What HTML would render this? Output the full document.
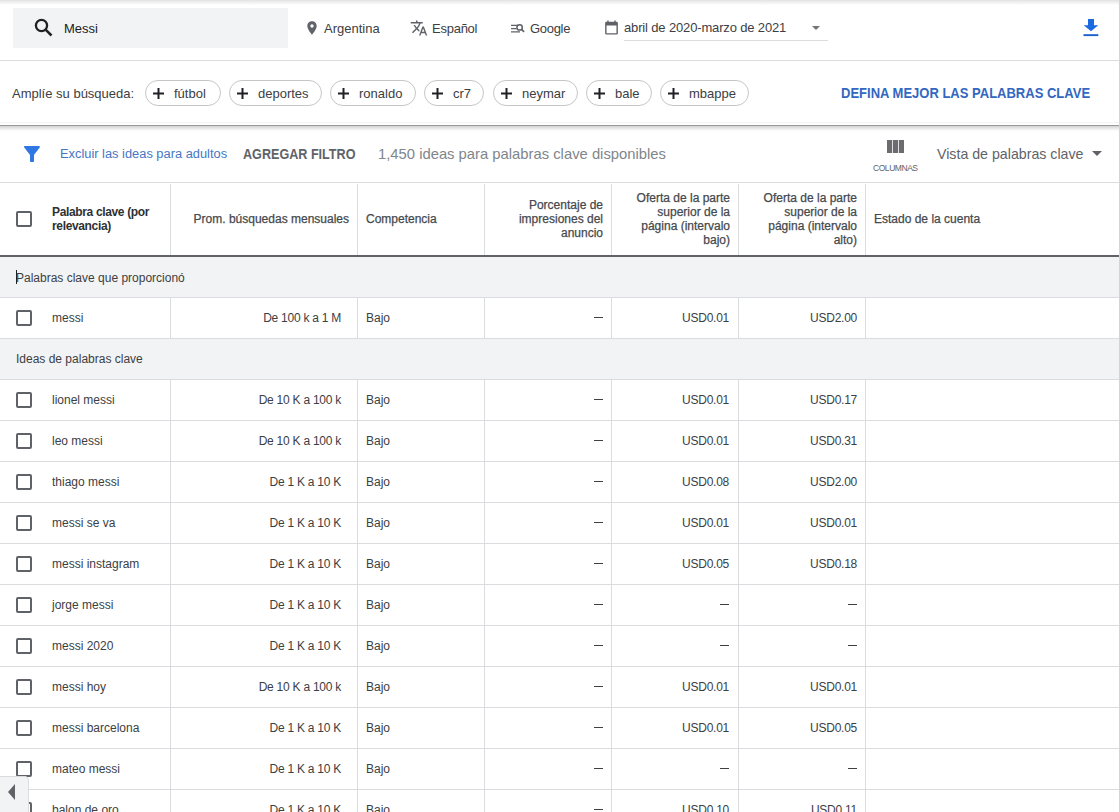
<!DOCTYPE html>
<html><head><meta charset="utf-8">
<style>
*{margin:0;padding:0;box-sizing:border-box}
html,body{width:1119px;height:812px;overflow:hidden;background:#fff;font-family:"Liberation Sans",sans-serif;color:#3c4043}
.a{position:absolute;white-space:nowrap}
#topshadow{position:absolute;left:0;top:0;width:1119px;height:5px;background:linear-gradient(#e2e2e2,#fff)}
#search{position:absolute;left:13px;top:8px;width:275px;height:40px;background:#f1f3f4}
.t13{font-size:13px;line-height:16px;color:#3c4043}
.chip{position:absolute;top:80px;height:26px;border:1px solid #c4c7c5;border-radius:13px;background:#fff}
.chip svg{position:absolute;left:7px;top:7px}
.chip span{position:absolute;left:28px;top:5px;font-size:13px;line-height:16px;color:#3c4043;white-space:nowrap}
.hl{position:absolute;left:0;width:1119px;height:1px;background:#dadce0}
.vl{position:absolute;width:1px;background:#dadce0}
.hd{position:absolute;top:183px;height:72px;display:flex;align-items:center;font-size:12px;line-height:14px;color:#45494d;-webkit-text-stroke:0.25px #45494d}
.hd.r{justify-content:flex-end;text-align:right}
.grp{position:absolute;left:0;width:1119px;background:#f1f3f4}
.cb{position:absolute;left:16px;width:16px;height:16px;border:2px solid #5f6368;border-radius:2px;background:#fff}
.c{position:absolute;font-size:12px;line-height:41px;height:41px;margin-top:1px;color:#3c4043;white-space:nowrap}
.num{letter-spacing:-0.25px}
.dash{position:absolute;width:9px;height:1.4px;background:#3c4043}
</style></head><body>
<div id="topshadow"></div>
<div id="search"></div>
<svg class="a" style="left:33px;top:17px" width="21" height="21" viewBox="0 0 21 21"><circle cx="8.5" cy="8.5" r="5.6" fill="none" stroke="#202124" stroke-width="2.3"/><path d="M12.6 12.6l5.9 5.9" stroke="#202124" stroke-width="2.5"/></svg>
<div class="a t13" style="left:64px;top:21px;font-size:13px;color:#202124">Messi</div>

<svg class="a" style="left:304px;top:20px" width="16" height="16" viewBox="0 0 24 24"><path fill="#5f6368" d="M12 2C8.13 2 5 5.13 5 9c0 5.25 7 13 7 13s7-7.75 7-13c0-3.870-3.13-7-7-7zm0 9.5a2.5 2.5 0 0 1 0-5 2.5 2.5 0 0 1 0 5z"/></svg>
<div class="a t13" style="left:324px;top:21px">Argentina</div>

<svg class="a" style="left:410px;top:19px" width="18" height="18" viewBox="0 0 24 24"><path fill="#5f6368" d="M12.87 15.07l-2.54-2.51.03-.03A17.52 17.520 0 0 0 14.07 6H17V4h-7V2H8v2H1v1.99h11.17C11.5 7.92 10.44 9.75 9 11.35 8.07 10.32 7.3 9.19 6.69 8h-2c.73 1.63 1.73 3.17 2.98 4.56l-5.09 5.02L4 19l5-5 3.11 3.11.76-2.04zM18.5 10h-2L12 22h2l1.12-3h4.75L21 22h2l-4.5-12zm-2.62 7l1.62-4.33L19.12 17h-3.24z"/></svg>
<div class="a t13" style="left:432px;top:21px;letter-spacing:-0.25px">Español</div>

<svg class="a" style="left:511px;top:23px" width="14" height="11" viewBox="0 0 14 11"><path fill="none" stroke="#5f6368" stroke-width="1.4" d="M0 2.4h7M0 5.6h5.5M0 8.9h9"/><circle cx="8.6" cy="4.4" r="2.7" fill="none" stroke="#5f6368" stroke-width="1.5"/><path stroke="#5f6368" stroke-width="1.7" d="M10.5 6.4l2.6 2.4"/></svg>
<div class="a t13" style="left:530px;top:21px;letter-spacing:-0.3px">Google</div>

<svg class="a" style="left:603px;top:19px" width="17" height="17" viewBox="0 0 24 24"><path fill="#5f6368" d="M19 4h-1V2h-2v2H8V2H6v2H5c-1.11 0-2 .9-2 2v14a2 2 0 0 0 2 2h14c1.1 0 2-.9 2-2V6c0-1.1-.9-2-2-2zm0 16H5V9h14v11z"/></svg>
<div class="a t13" style="left:624px;top:20px;letter-spacing:-0.15px">abril de 2020-marzo de 2021</div>
<div class="a" style="left:624px;top:40px;width:204px;height:1px;background:#dadce0"></div>
<div class="a" style="left:812px;top:26px;width:0;height:0;border-left:4px solid transparent;border-right:4px solid transparent;border-top:4px solid #757575"></div>

<svg class="a" style="left:1083px;top:19px" width="16" height="18" viewBox="0 0 16 18" preserveAspectRatio="none"><path fill="#1b6be0" d="M5 0h6v6.3h4.3L8 12.3 0.7 6.3H5z"/><rect x="0.5" y="15.2" width="14.8" height="1.9" fill="#1b62c8"/></svg>

<div class="hl" style="top:60px"></div>

<div class="a t13" style="left:12px;top:86px">Amplíe su búsqueda:</div>
<div class="chip" style="left:145px;width:76px"><svg width="11" height="11" viewBox="0 0 11 11"><path stroke="#202124" stroke-width="2" d="M5.5 0v11M0 5.5h11"/></svg><span>fútbol</span></div>
<div class="chip" style="left:229px;width:93px"><svg width="11" height="11" viewBox="0 0 11 11"><path stroke="#202124" stroke-width="2" d="M5.5 0v11M0 5.5h11"/></svg><span>deportes</span></div>
<div class="chip" style="left:330px;width:86px"><svg width="11" height="11" viewBox="0 0 11 11"><path stroke="#202124" stroke-width="2" d="M5.5 0v11M0 5.5h11"/></svg><span>ronaldo</span></div>
<div class="chip" style="left:424px;width:60px"><svg width="11" height="11" viewBox="0 0 11 11"><path stroke="#202124" stroke-width="2" d="M5.5 0v11M0 5.5h11"/></svg><span>cr7</span></div>
<div class="chip" style="left:493px;width:85px"><svg width="11" height="11" viewBox="0 0 11 11"><path stroke="#202124" stroke-width="2" d="M5.5 0v11M0 5.5h11"/></svg><span>neymar</span></div>
<div class="chip" style="left:586px;width:66px"><svg width="11" height="11" viewBox="0 0 11 11"><path stroke="#202124" stroke-width="2" d="M5.5 0v11M0 5.5h11"/></svg><span>bale</span></div>
<div class="chip" style="left:660px;width:89px"><svg width="11" height="11" viewBox="0 0 11 11"><path stroke="#202124" stroke-width="2" d="M5.5 0v11M0 5.5h11"/></svg><span>mbappe</span></div>
<div class="a" style="left:841px;top:85px;font-size:14px;line-height:16px;font-weight:bold;transform:scaleX(0.929);transform-origin:0 0;color:#3367c0">DEFINA MEJOR LAS PALABRAS CLAVE</div>

<div class="a" style="left:0;top:122px;width:1119px;height:1px;background:#f4f4f4"></div>
<div class="a" style="left:0;top:125px;width:1119px;height:1px;background:#999"></div>
<div class="a" style="left:0;top:126px;width:1119px;height:5px;background:linear-gradient(#d4d4d4,#fff)"></div>

<svg class="a" style="left:24px;top:146px" width="16" height="16" viewBox="4 4 16 16"><path fill="#2f78e4" d="M4.25 5.61C6.27 8.2 10 13 10 13v6c0 .55.45 1 1 1h2c.55 0 1-.45 1-1v-6s3.72-4.8 5.740-7.39A.998.998 0 0 0 18.95 4H5.04c-.83 0-1.3.95-.79 1.61z"/></svg>
<div class="a t13" style="left:60px;top:146px;font-size:12.85px;color:#4676c4">Excluir las ideas para adultos</div>
<div class="a" style="left:243px;top:145px;font-size:14px;line-height:18px;font-weight:bold;transform:scaleX(0.9);transform-origin:0 0;color:#5f6368">AGREGAR FILTRO</div>
<div class="a" style="left:378px;top:145px;font-size:14.8px;line-height:18px;color:#80868b">1,450 ideas para palabras clave disponibles</div>

<svg class="a" style="left:887px;top:140px" width="17" height="13" viewBox="0 0 17 13"><rect x="0" y="0" width="5.2" height="13" fill="#6b6b70"/><rect x="6" y="0" width="5" height="13" fill="#6b6b70"/><rect x="11.8" y="0" width="5.2" height="13" fill="#6b6b70"/></svg>
<div class="a" style="left:873px;top:163px;font-size:8.5px;line-height:10px;color:#5f6368;letter-spacing:-0.45px">COLUMNAS</div>
<div class="a" style="left:937px;top:145px;font-size:14.2px;line-height:18px;color:#5f6368">Vista de palabras clave</div>
<div class="a" style="left:1092px;top:151px;width:0;height:0;border-left:5px solid transparent;border-right:5px solid transparent;border-top:5px solid #5f6368"></div>

<div class="hl" style="top:182px"></div>
<!-- header -->
<div class="cb" style="top:211px"></div>
<div class="hd" style="left:52px;width:110px;font-weight:bold;-webkit-text-stroke:0;color:#2e3134;letter-spacing:-0.35px">Palabra clave (por<br>relevancia)</div>
<div class="hd r" style="left:170px;width:179px">Prom. búsquedas mensuales</div>
<div class="hd" style="left:366px;width:110px">Competencia</div>
<div class="hd r" style="left:484px;width:119px">Porcentaje de<br>impresiones del<br>anuncio</div>
<div class="hd r" style="left:611px;width:119px">Oferta de la parte<br>superior de la<br>página (intervalo<br>bajo)</div>
<div class="hd r" style="left:738px;width:119px">Oferta de la parte<br>superior de la<br>página (intervalo<br>alto)</div>
<div class="hd" style="left:874px;width:200px">Estado de la cuenta</div>
<div class="vl" style="left:170px;top:184px;height:71px"></div>
<div class="vl" style="left:357px;top:184px;height:71px"></div>
<div class="vl" style="left:484px;top:184px;height:71px"></div>
<div class="vl" style="left:611px;top:184px;height:71px"></div>
<div class="vl" style="left:738px;top:184px;height:71px"></div>
<div class="vl" style="left:865px;top:184px;height:71px"></div>
<div class="a" style="left:0;top:255px;width:1119px;height:2px;background:#5f6368"></div>
<div class="grp" style="top:257px;height:40px"></div>
<div class="c gt" style="left:16px;top:257px">Palabras clave que proporcionó</div>
<div class="a" style="left:16px;top:270px;width:1px;height:14px;background:#202124"></div>
<div class="hl" style="top:297px"></div>
<div class="cb" style="top:310px"></div>
<div class="c kw" style="left:52px;top:297px">messi</div>
<div class="c num" style="right:778px;top:297px">De 100 k a 1 M</div>
<div class="c" style="left:366px;top:297px">Bajo</div>
<div class="dash" style="left:594px;top:317px"></div>
<div class="c num" style="right:390px;top:297px">USD0.01</div>
<div class="c num" style="right:262px;top:297px">USD2.00</div>
<div class="vl" style="left:170px;top:297px;height:41px"></div>
<div class="vl" style="left:357px;top:297px;height:41px"></div>
<div class="vl" style="left:484px;top:297px;height:41px"></div>
<div class="vl" style="left:611px;top:297px;height:41px"></div>
<div class="vl" style="left:738px;top:297px;height:41px"></div>
<div class="vl" style="left:865px;top:297px;height:41px"></div>
<div class="hl" style="top:338px"></div>
<div class="grp" style="top:339px;height:40px"></div>
<div class="c gt" style="left:16px;top:338px">Ideas de palabras clave</div>
<div class="hl" style="top:379px"></div>
<div class="cb" style="top:392px"></div>
<div class="c kw" style="left:52px;top:379px">lionel messi</div>
<div class="c num" style="right:778px;top:379px">De 10 K a 100 k</div>
<div class="c" style="left:366px;top:379px">Bajo</div>
<div class="dash" style="left:594px;top:399px"></div>
<div class="c num" style="right:390px;top:379px">USD0.01</div>
<div class="c num" style="right:262px;top:379px">USD0.17</div>
<div class="vl" style="left:170px;top:379px;height:41px"></div>
<div class="vl" style="left:357px;top:379px;height:41px"></div>
<div class="vl" style="left:484px;top:379px;height:41px"></div>
<div class="vl" style="left:611px;top:379px;height:41px"></div>
<div class="vl" style="left:738px;top:379px;height:41px"></div>
<div class="vl" style="left:865px;top:379px;height:41px"></div>
<div class="hl" style="top:420px"></div>
<div class="cb" style="top:433px"></div>
<div class="c kw" style="left:52px;top:420px">leo messi</div>
<div class="c num" style="right:778px;top:420px">De 10 K a 100 k</div>
<div class="c" style="left:366px;top:420px">Bajo</div>
<div class="dash" style="left:594px;top:440px"></div>
<div class="c num" style="right:390px;top:420px">USD0.01</div>
<div class="c num" style="right:262px;top:420px">USD0.31</div>
<div class="vl" style="left:170px;top:420px;height:41px"></div>
<div class="vl" style="left:357px;top:420px;height:41px"></div>
<div class="vl" style="left:484px;top:420px;height:41px"></div>
<div class="vl" style="left:611px;top:420px;height:41px"></div>
<div class="vl" style="left:738px;top:420px;height:41px"></div>
<div class="vl" style="left:865px;top:420px;height:41px"></div>
<div class="hl" style="top:461px"></div>
<div class="cb" style="top:474px"></div>
<div class="c kw" style="left:52px;top:461px">thiago messi</div>
<div class="c num" style="right:778px;top:461px">De 1 K a 10 K</div>
<div class="c" style="left:366px;top:461px">Bajo</div>
<div class="dash" style="left:594px;top:481px"></div>
<div class="c num" style="right:390px;top:461px">USD0.08</div>
<div class="c num" style="right:262px;top:461px">USD2.00</div>
<div class="vl" style="left:170px;top:461px;height:41px"></div>
<div class="vl" style="left:357px;top:461px;height:41px"></div>
<div class="vl" style="left:484px;top:461px;height:41px"></div>
<div class="vl" style="left:611px;top:461px;height:41px"></div>
<div class="vl" style="left:738px;top:461px;height:41px"></div>
<div class="vl" style="left:865px;top:461px;height:41px"></div>
<div class="hl" style="top:502px"></div>
<div class="cb" style="top:515px"></div>
<div class="c kw" style="left:52px;top:502px">messi se va</div>
<div class="c num" style="right:778px;top:502px">De 1 K a 10 K</div>
<div class="c" style="left:366px;top:502px">Bajo</div>
<div class="dash" style="left:594px;top:522px"></div>
<div class="c num" style="right:390px;top:502px">USD0.01</div>
<div class="c num" style="right:262px;top:502px">USD0.01</div>
<div class="vl" style="left:170px;top:502px;height:41px"></div>
<div class="vl" style="left:357px;top:502px;height:41px"></div>
<div class="vl" style="left:484px;top:502px;height:41px"></div>
<div class="vl" style="left:611px;top:502px;height:41px"></div>
<div class="vl" style="left:738px;top:502px;height:41px"></div>
<div class="vl" style="left:865px;top:502px;height:41px"></div>
<div class="hl" style="top:543px"></div>
<div class="cb" style="top:556px"></div>
<div class="c kw" style="left:52px;top:543px">messi instagram</div>
<div class="c num" style="right:778px;top:543px">De 1 K a 10 K</div>
<div class="c" style="left:366px;top:543px">Bajo</div>
<div class="dash" style="left:594px;top:563px"></div>
<div class="c num" style="right:390px;top:543px">USD0.05</div>
<div class="c num" style="right:262px;top:543px">USD0.18</div>
<div class="vl" style="left:170px;top:543px;height:41px"></div>
<div class="vl" style="left:357px;top:543px;height:41px"></div>
<div class="vl" style="left:484px;top:543px;height:41px"></div>
<div class="vl" style="left:611px;top:543px;height:41px"></div>
<div class="vl" style="left:738px;top:543px;height:41px"></div>
<div class="vl" style="left:865px;top:543px;height:41px"></div>
<div class="hl" style="top:584px"></div>
<div class="cb" style="top:597px"></div>
<div class="c kw" style="left:52px;top:584px">jorge messi</div>
<div class="c num" style="right:778px;top:584px">De 1 K a 10 K</div>
<div class="c" style="left:366px;top:584px">Bajo</div>
<div class="dash" style="left:594px;top:604px"></div>
<div class="dash" style="left:720px;top:604px"></div>
<div class="dash" style="left:848px;top:604px"></div>
<div class="vl" style="left:170px;top:584px;height:41px"></div>
<div class="vl" style="left:357px;top:584px;height:41px"></div>
<div class="vl" style="left:484px;top:584px;height:41px"></div>
<div class="vl" style="left:611px;top:584px;height:41px"></div>
<div class="vl" style="left:738px;top:584px;height:41px"></div>
<div class="vl" style="left:865px;top:584px;height:41px"></div>
<div class="hl" style="top:625px"></div>
<div class="cb" style="top:638px"></div>
<div class="c kw" style="left:52px;top:625px">messi 2020</div>
<div class="c num" style="right:778px;top:625px">De 1 K a 10 K</div>
<div class="c" style="left:366px;top:625px">Bajo</div>
<div class="dash" style="left:594px;top:645px"></div>
<div class="dash" style="left:720px;top:645px"></div>
<div class="dash" style="left:848px;top:645px"></div>
<div class="vl" style="left:170px;top:625px;height:41px"></div>
<div class="vl" style="left:357px;top:625px;height:41px"></div>
<div class="vl" style="left:484px;top:625px;height:41px"></div>
<div class="vl" style="left:611px;top:625px;height:41px"></div>
<div class="vl" style="left:738px;top:625px;height:41px"></div>
<div class="vl" style="left:865px;top:625px;height:41px"></div>
<div class="hl" style="top:666px"></div>
<div class="cb" style="top:679px"></div>
<div class="c kw" style="left:52px;top:666px">messi hoy</div>
<div class="c num" style="right:778px;top:666px">De 10 K a 100 k</div>
<div class="c" style="left:366px;top:666px">Bajo</div>
<div class="dash" style="left:594px;top:686px"></div>
<div class="c num" style="right:390px;top:666px">USD0.01</div>
<div class="c num" style="right:262px;top:666px">USD0.01</div>
<div class="vl" style="left:170px;top:666px;height:41px"></div>
<div class="vl" style="left:357px;top:666px;height:41px"></div>
<div class="vl" style="left:484px;top:666px;height:41px"></div>
<div class="vl" style="left:611px;top:666px;height:41px"></div>
<div class="vl" style="left:738px;top:666px;height:41px"></div>
<div class="vl" style="left:865px;top:666px;height:41px"></div>
<div class="hl" style="top:707px"></div>
<div class="cb" style="top:720px"></div>
<div class="c kw" style="left:52px;top:707px">messi barcelona</div>
<div class="c num" style="right:778px;top:707px">De 1 K a 10 K</div>
<div class="c" style="left:366px;top:707px">Bajo</div>
<div class="dash" style="left:594px;top:727px"></div>
<div class="c num" style="right:390px;top:707px">USD0.01</div>
<div class="c num" style="right:262px;top:707px">USD0.05</div>
<div class="vl" style="left:170px;top:707px;height:41px"></div>
<div class="vl" style="left:357px;top:707px;height:41px"></div>
<div class="vl" style="left:484px;top:707px;height:41px"></div>
<div class="vl" style="left:611px;top:707px;height:41px"></div>
<div class="vl" style="left:738px;top:707px;height:41px"></div>
<div class="vl" style="left:865px;top:707px;height:41px"></div>
<div class="hl" style="top:748px"></div>
<div class="cb" style="top:761px"></div>
<div class="c kw" style="left:52px;top:748px">mateo messi</div>
<div class="c num" style="right:778px;top:748px">De 1 K a 10 K</div>
<div class="c" style="left:366px;top:748px">Bajo</div>
<div class="dash" style="left:594px;top:768px"></div>
<div class="dash" style="left:720px;top:768px"></div>
<div class="dash" style="left:848px;top:768px"></div>
<div class="vl" style="left:170px;top:748px;height:41px"></div>
<div class="vl" style="left:357px;top:748px;height:41px"></div>
<div class="vl" style="left:484px;top:748px;height:41px"></div>
<div class="vl" style="left:611px;top:748px;height:41px"></div>
<div class="vl" style="left:738px;top:748px;height:41px"></div>
<div class="vl" style="left:865px;top:748px;height:41px"></div>
<div class="hl" style="top:789px"></div>
<div class="cb" style="top:802px"></div>
<div class="c kw" style="left:52px;top:789px">balon de oro</div>
<div class="c num" style="right:778px;top:789px">De 1 K a 10 K</div>
<div class="c" style="left:366px;top:789px">Bajo</div>
<div class="dash" style="left:594px;top:809px"></div>
<div class="c num" style="right:390px;top:789px">USD0.10</div>
<div class="c num" style="right:262px;top:789px">USD0.11</div>
<div class="vl" style="left:170px;top:789px;height:41px"></div>
<div class="vl" style="left:357px;top:789px;height:41px"></div>
<div class="vl" style="left:484px;top:789px;height:41px"></div>
<div class="vl" style="left:611px;top:789px;height:41px"></div>
<div class="vl" style="left:738px;top:789px;height:41px"></div>
<div class="vl" style="left:865px;top:789px;height:41px"></div>
<div class="hl" style="top:830px"></div>
<div class="a" style="left:-1px;top:776px;width:30px;height:40px;background:#f1f3f4;border:1px solid #dcdcdc;border-top-right-radius:4px"></div>
<div class="a" style="left:8px;top:784px;width:0;height:0;border-top:8px solid transparent;border-bottom:8px solid transparent;border-right:7px solid #5f6368"></div>

</body></html>
